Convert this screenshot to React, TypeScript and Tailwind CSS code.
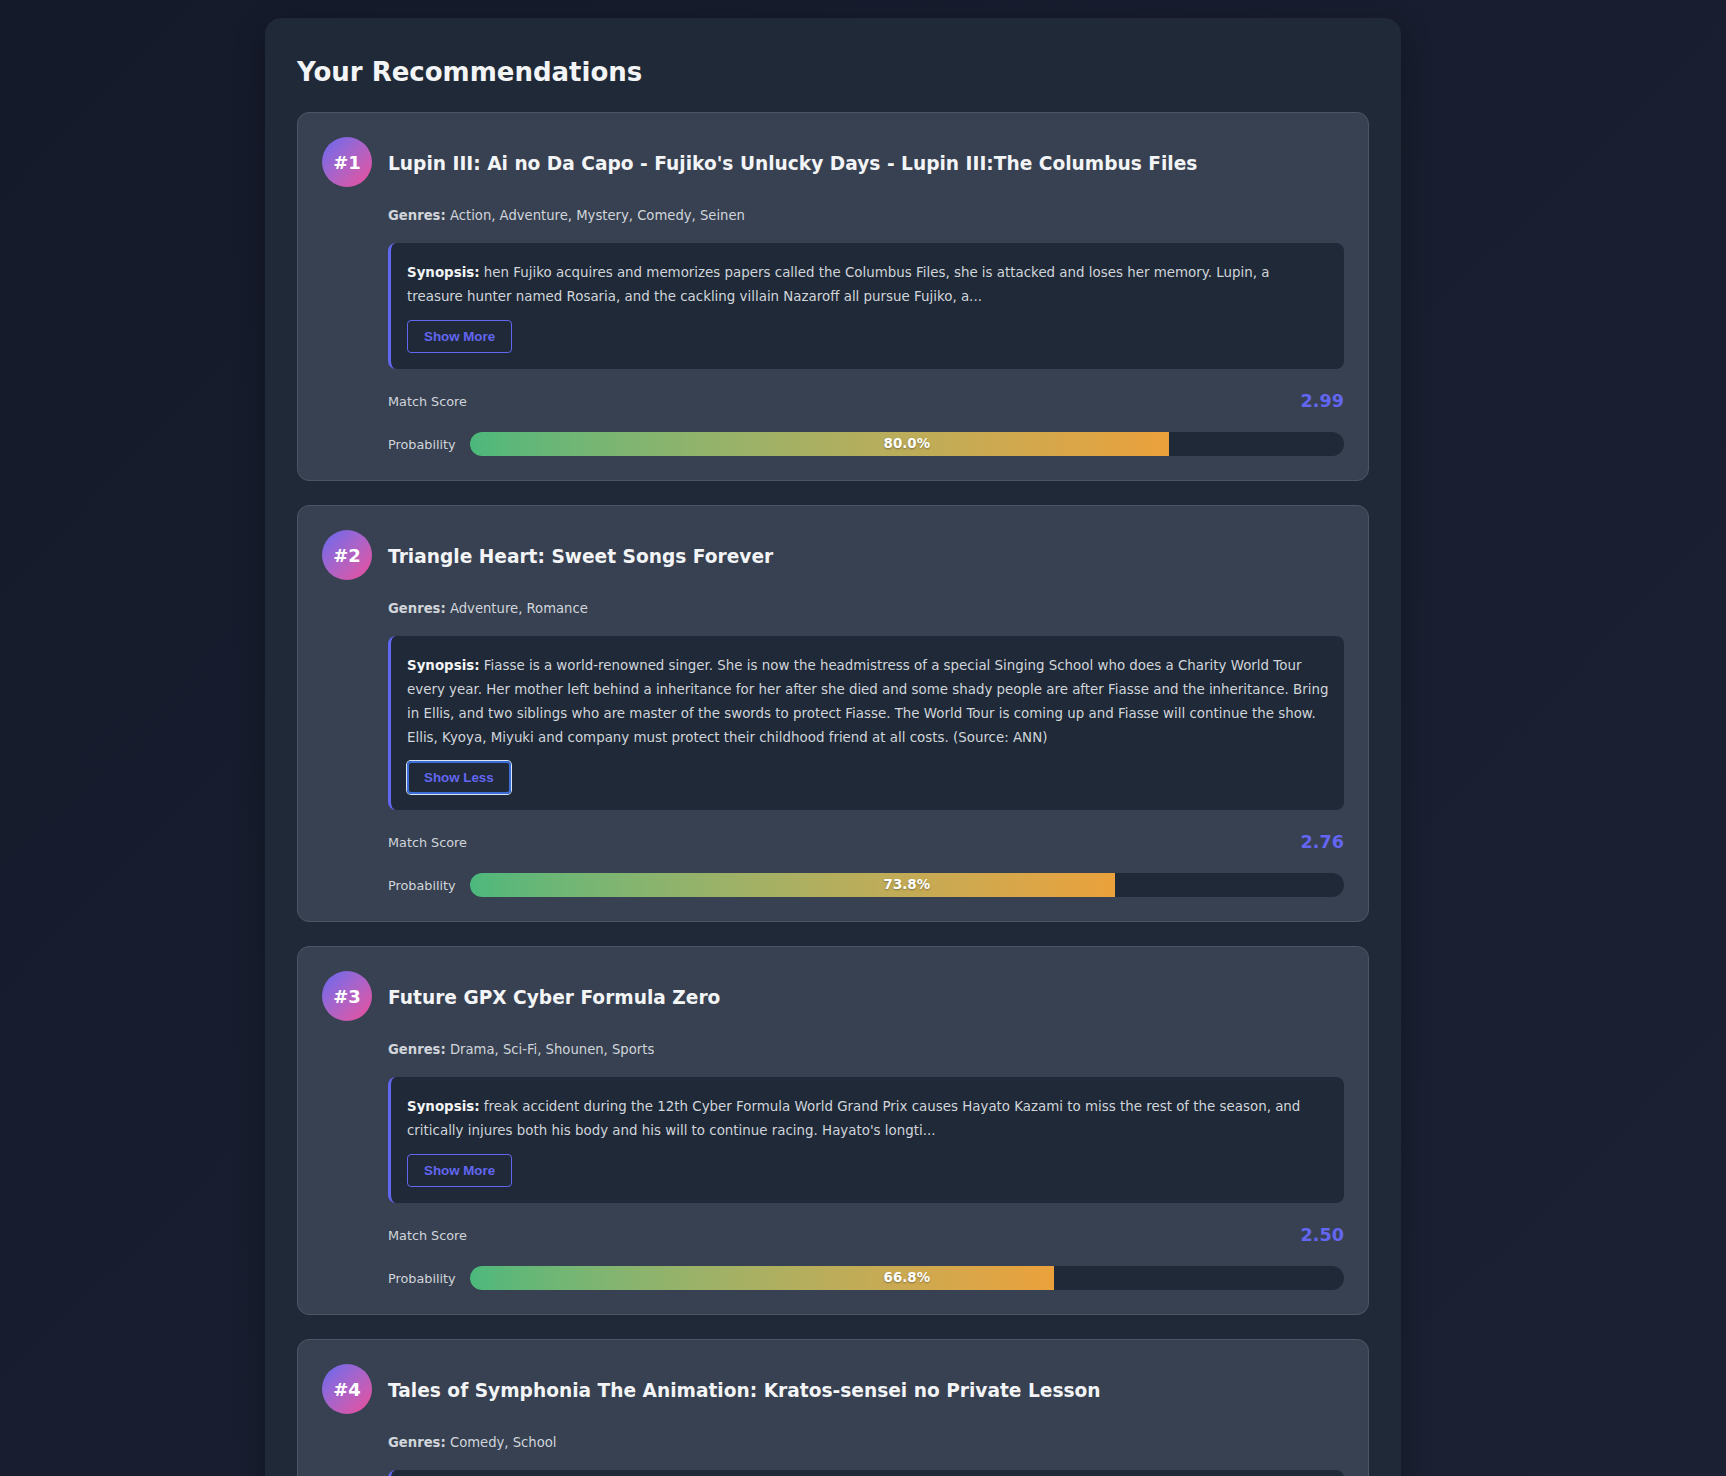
import React from "react";

type Rec = {
  rank: number;
  title: string;
  genres: string;
  synopsis: string;
  expanded: boolean;
  focused?: boolean;
  score: string;
  prob: number;
};

const recs: Rec[] = [
  {
    rank: 1,
    title: "Lupin III: Ai no Da Capo - Fujiko's Unlucky Days - Lupin III:The Columbus Files",
    genres: "Action, Adventure, Mystery, Comedy, Seinen",
    synopsis:
      "hen Fujiko acquires and memorizes papers called the Columbus Files, she is attacked and loses her memory. Lupin, a treasure hunter named Rosaria, and the cackling villain Nazaroff all pursue Fujiko, a...",
    expanded: false,
    score: "2.99",
    prob: 80.0,
  },
  {
    rank: 2,
    title: "Triangle Heart: Sweet Songs Forever",
    genres: "Adventure, Romance",
    synopsis:
      "Fiasse is a world-renowned singer. She is now the headmistress of a special Singing School who does a Charity World Tour every year. Her mother left behind a inheritance for her after she died and some shady people are after Fiasse and the inheritance. Bring in Ellis, and two siblings who are master of the swords to protect Fiasse. The World Tour is coming up and Fiasse will continue the show. Ellis, Kyoya, Miyuki and company must protect their childhood friend at all costs. (Source: ANN)",
    expanded: true,
    focused: true,
    score: "2.76",
    prob: 73.8,
  },
  {
    rank: 3,
    title: "Future GPX Cyber Formula Zero",
    genres: "Drama, Sci-Fi, Shounen, Sports",
    synopsis:
      "freak accident during the 12th Cyber Formula World Grand Prix causes Hayato Kazami to miss the rest of the season, and critically injures both his body and his will to continue racing. Hayato's longti...",
    expanded: false,
    score: "2.50",
    prob: 66.8,
  },
  {
    rank: 4,
    title: "Tales of Symphonia The Animation: Kratos-sensei no Private Lesson",
    genres: "Comedy, School",
    synopsis:
      "Kratos-sensei gives a private lesson to the cast of Tales of Symphonia in this special bonus episode, covering the world and characters of the series...",
    expanded: false,
    score: "2.41",
    prob: 64.3,
  },
];

function Card({ r }: { r: Rec }) {
  return (
    <div className="rounded-xl border border-[#4b5563] bg-[#374151] p-6">
      <div className="flex items-center gap-4">
        <div className="flex h-[50px] w-[50px] shrink-0 items-center justify-center rounded-full bg-gradient-to-br from-[#6366f1] to-[#ec4899] text-[18px] font-bold text-white">
          #{r.rank}
        </div>
        <h3 className="pt-[4px] text-[18.6px] font-bold leading-[1.3] text-[#f3f4f6]">{r.title}</h3>
      </div>
      <div className="ml-[66px]">
        <p className="mt-[19px] text-[13.2px] leading-[20px] text-[#d1d5db]">
          <span className="font-bold">Genres:</span> {r.genres}
        </p>
        <div className="mt-[17px] rounded-lg border-l-[3px] border-[#6366f1] bg-[#1f2937] pb-4 pl-4 pr-[15px] pt-[18px]">
          <p className="text-[13.4px] leading-[24px] text-[#d1d5db]">
            <span className="font-bold text-[#f3f4f6]">Synopsis:</span> {r.synopsis}
          </p>
          <button
            className={
              r.focused
                ? "mt-[11px] rounded-[4px] border-2 border-[#3b6fd8] px-[15px] py-[7px] text-[13.33px] font-bold text-[#6366f1] shadow-[0_0_0_1px_#dbe4f5]"
                : "mt-[11px] rounded-[4px] border border-[#6366f1] px-4 py-2 text-[13.33px] font-bold text-[#6366f1]"
            }
            style={{ fontFamily: "'Liberation Sans', Arial, sans-serif", lineHeight: "15px" }}
          >
            {r.expanded ? "Show Less" : "Show More"}
          </button>
        </div>
        <div className="mt-[18px] flex items-center justify-between">
          <span className="text-[12.8px] text-[#d1d5db]">Match Score</span>
          <span className="text-[17.6px] font-bold leading-[28px] text-[#6366f1]">{r.score}</span>
        </div>
        <div className="mt-[17px] flex items-center gap-[14px]">
          <span className="text-[12.8px] text-[#d1d5db]">Probability</span>
          <div className="relative h-6 flex-1 overflow-hidden rounded-full bg-[#1f2937]">
            <div
              className="h-full bg-gradient-to-r from-[#4cb87c] to-[#eba13b]"
              style={{ width: `${r.prob}%` }}
            />
            <div className="absolute inset-0 flex items-center justify-center text-[13.4px] font-bold text-white [text-shadow:0_1px_2px_rgba(0,0,0,0.35)]">
              {r.prob.toFixed(1)}%
            </div>
          </div>
        </div>
      </div>
    </div>
  );
}

export default function App() {
  return (
    <div
      className="min-h-screen bg-gradient-to-br from-[#151a2b] to-[#1c2234] pb-8 pt-[18px]"
      style={{ fontFamily: "'DejaVu Sans', Verdana, sans-serif" }}
    >
      <div className="ml-[265px] w-[1136px] rounded-2xl bg-[#1f2937] p-8 shadow-[0_10px_30px_rgba(0,0,0,0.3)]">
        <h2 className="mb-[24px] pt-[7px] text-[26px] font-bold leading-[1.2] text-[#f3f4f6]">Your Recommendations</h2>
        <div className="flex flex-col gap-[24px]">
          {recs.map((r) => (
            <Card key={r.rank} r={r} />
          ))}
        </div>
      </div>
    </div>
  );
}
